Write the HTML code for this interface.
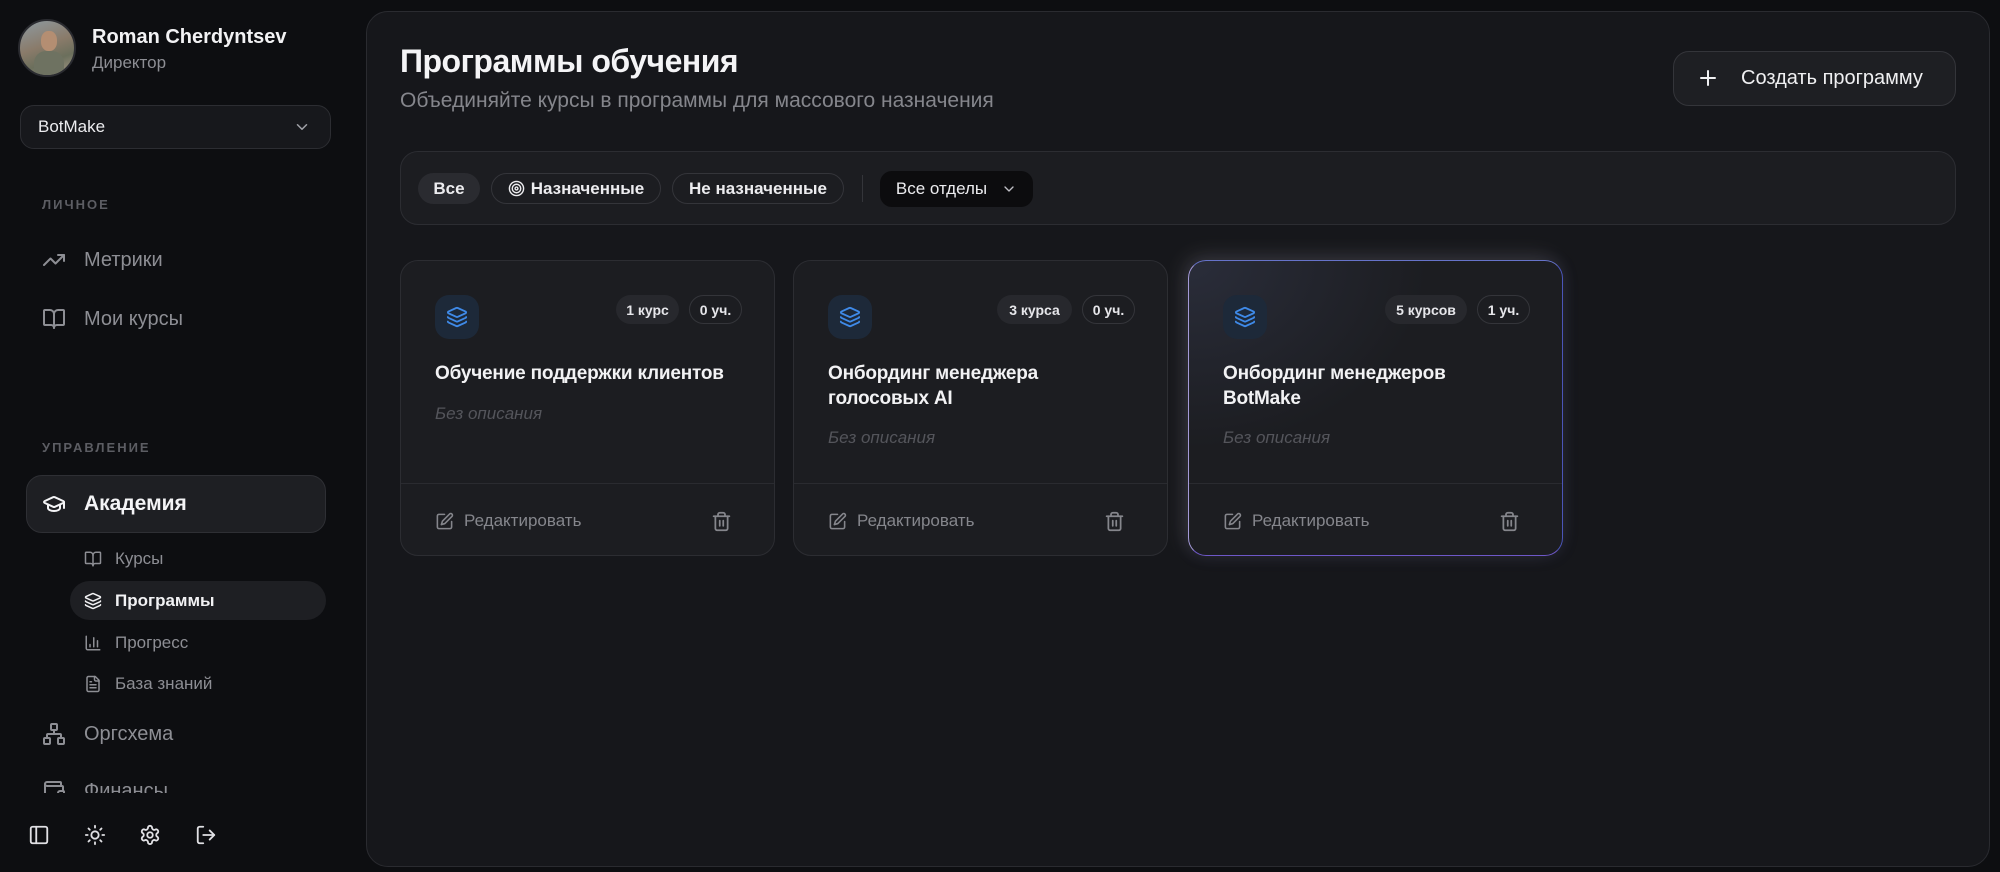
<!DOCTYPE html>
<html><head><meta charset="utf-8"><style>
*{box-sizing:border-box;margin:0;padding:0}
body{width:2000px;height:872px;overflow:hidden;background:#0d0e11;font-family:"Liberation Sans","DejaVu Sans",sans-serif;color:#ececef;position:relative}
.abs{position:absolute}
svg{display:block}
.ic{fill:none;stroke:currentColor;stroke-width:2;stroke-linecap:round;stroke-linejoin:round}
.nav{position:absolute;left:42px;display:flex;align-items:center;color:#8d8e94;font-size:20px}
.nav svg{width:24px;height:24px;margin-right:18px}
.sub{position:absolute;left:84px;display:flex;align-items:center;color:#8d8e94;font-size:17px;height:38px}
.sub svg{width:18px;height:18px;margin-right:13px}
.sec{position:absolute;left:42px;font-size:13px;letter-spacing:2px;color:#5c5d63;font-weight:bold}
.main{position:absolute;left:366px;top:11px;width:1624px;height:856px;border:1px solid #2a2b30;border-radius:22px;background:#16171b}
.chip{position:absolute;top:173px;height:31px;border-radius:16px;font-size:17px;font-weight:bold;display:flex;align-items:center;justify-content:center;color:#ececef}
.card{position:absolute;top:260px;width:375px;height:296px;border:1px solid #2c2d32;border-radius:18px;background:#1c1d21;overflow:hidden}
.cico{position:absolute;left:34px;top:34px;width:44px;height:44px;border-radius:14px;background:#1d2939;display:flex;align-items:center;justify-content:center;color:#3f8ae8}
.badge{position:absolute;top:34px;height:29px;border-radius:15px;font-size:14px;font-weight:bold;display:flex;align-items:center;justify-content:center;color:#e6e6ea}
.b1{background:#27282d}
.b2{border:1px solid #34353a}
.ttl{position:absolute;left:34px;top:100px;width:296px;font-size:19px;font-weight:bold;line-height:25px;color:#f2f2f4;letter-spacing:-0.2px}
.desc{position:absolute;left:34px;font-size:17px;font-style:italic;color:#54555b}
.div{position:absolute;left:0;right:0;top:222px;border-top:1px solid #2a2b30}
.edit{position:absolute;left:34px;top:250px;display:flex;align-items:center;color:#85868c;font-size:17px}
.edit svg{width:19px;height:19px;margin-right:10px}
.trash{position:absolute;left:310px;top:249px;color:#85868c}
</style></head><body>

<div class="abs" style="left:18px;top:19px;width:58px;height:58px;border-radius:50%;border:2px solid #2a2b30;background:radial-gradient(circle at 55% 35%,#c9a98c 0 14%,transparent 15%),linear-gradient(160deg,#8d9aa1 0%,#8a7b6a 45%,#6b6f5c 70%,#a89b89 100%);overflow:hidden">
<div class="abs" style="left:14px;top:30px;width:30px;height:30px;border-radius:40% 40% 0 0;background:#6e7261"></div>
<div class="abs" style="left:21px;top:10px;width:16px;height:20px;border-radius:45%;background:#b48e72"></div>
</div>
<div class="abs" style="left:92px;top:26px;font-size:20px;font-weight:bold;color:#f2f2f4">Roman Cherdyntsev</div>
<div class="abs" style="left:92px;top:53px;font-size:17px;color:#8d8e94">Директор</div>

<div class="abs" style="left:20px;top:105px;width:311px;height:44px;border:1px solid #2c2d32;border-radius:14px;background:#17181c"></div>
<div class="abs" style="left:38px;top:117px;font-size:17px;color:#ececef">BotMake</div>
<svg class="abs ic" style="left:293px;top:118px;color:#a0a1a7" width="18" height="18" viewBox="0 0 24 24"><path d="M6 9l6 6 6-6"/></svg>

<div class="sec" style="top:197px">ЛИЧНОЕ</div>
<div class="nav" style="top:248px"><svg class="ic" viewBox="0 0 24 24"><path d="M22 7l-8.5 8.5-5-5L2 17"/><path d="M16 7h6v6"/></svg>Метрики</div>
<div class="nav" style="top:307px"><svg class="ic" viewBox="0 0 24 24"><path d="M12 7v14"/><path d="M3 18a1 1 0 0 1-1-1V4a1 1 0 0 1 1-1h5a4 4 0 0 1 4 4 4 4 0 0 1 4-4h5a1 1 0 0 1 1 1v13a1 1 0 0 1-1 1h-6a3 3 0 0 0-3 3 3 3 0 0 0-3-3z"/></svg>Мои курсы</div>

<div class="sec" style="top:440px">УПРАВЛЕНИЕ</div>
<div class="abs" style="left:26px;top:475px;width:300px;height:58px;border:1px solid #2e2f34;border-radius:16px;background:#1e1f23"></div>
<div class="nav" style="top:492px;color:#f4f4f6;font-weight:bold;font-size:21px"><svg class="ic" viewBox="0 0 24 24"><path d="M21.4 10.9a1 1 0 0 0 0-1.8L12.8 5.2a2 2 0 0 0-1.7 0L2.6 9.1a1 1 0 0 0 0 1.8l8.6 3.9a2 2 0 0 0 1.7 0z"/><path d="M22 10v6"/><path d="M6 12.5V16a6 3 0 0 0 12 0v-3.5"/></svg>Академия</div>

<div class="sub" style="top:540px"><svg class="ic" viewBox="0 0 24 24"><path d="M12 7v14"/><path d="M3 18a1 1 0 0 1-1-1V4a1 1 0 0 1 1-1h5a4 4 0 0 1 4 4 4 4 0 0 1 4-4h5a1 1 0 0 1 1 1v13a1 1 0 0 1-1 1h-6a3 3 0 0 0-3 3 3 3 0 0 0-3-3z"/></svg>Курсы</div>
<div class="abs" style="left:70px;top:581px;width:256px;height:39px;border-radius:20px;background:#1e1f23"></div>
<div class="sub" style="top:582px;color:#f2f2f4;font-weight:bold"><svg class="ic" viewBox="0 0 24 24"><path d="M12.8 2.2a2 2 0 0 0-1.7 0L2.6 6.1a1 1 0 0 0 0 1.8l8.6 3.9a2 2 0 0 0 1.7 0l8.5-3.9a1 1 0 0 0 0-1.8z"/><path d="M2 12a1 1 0 0 0 .6.9l8.6 3.9a2 2 0 0 0 1.7 0l8.6-3.9A1 1 0 0 0 22 12"/><path d="M2 17a1 1 0 0 0 .6.9l8.6 3.9a2 2 0 0 0 1.7 0l8.6-3.9A1 1 0 0 0 22 17"/></svg>Программы</div>
<div class="sub" style="top:624px"><svg class="ic" viewBox="0 0 24 24"><path d="M3 3v16a2 2 0 0 0 2 2h16"/><path d="M18 17V9"/><path d="M13 17V5"/><path d="M8 17v-3"/></svg>Прогресс</div>
<div class="sub" style="top:665px"><svg class="ic" viewBox="0 0 24 24"><path d="M15 2H6a2 2 0 0 0-2 2v16a2 2 0 0 0 2 2h12a2 2 0 0 0 2-2V7z"/><path d="M14 2v4a2 2 0 0 0 2 2h4"/><path d="M10 9H8M16 13H8M16 17H8"/></svg>База знаний</div>
<div class="nav" style="top:722px"><svg class="ic" viewBox="0 0 24 24"><rect x="16" y="16" width="6" height="6" rx="1"/><rect x="2" y="16" width="6" height="6" rx="1"/><rect x="9" y="2" width="6" height="6" rx="1"/><path d="M5 16v-3a1 1 0 0 1 1-1h12a1 1 0 0 1 1 1v3"/><path d="M12 12V8"/></svg>Оргсхема</div>
<div class="abs" style="left:0;top:775px;width:340px;height:18px;overflow:hidden">
<div class="nav" style="top:4px"><svg class="ic" viewBox="0 0 24 24"><path d="M19 7V4a1 1 0 0 0-1-1H5a2 2 0 0 0 0 4h15a1 1 0 0 1 1 1v4h-3a2 2 0 0 0 0 4h3a1 1 0 0 0 1-1v-2a1 1 0 0 0-1-1"/><path d="M3 5v14a2 2 0 0 0 2 2h15a1 1 0 0 0 1-1v-4"/></svg>Финансы</div>
</div>

<svg class="abs ic" style="left:28px;top:824px;color:#e0e0e4" width="22" height="22" viewBox="0 0 24 24"><rect x="3" y="3" width="18" height="18" rx="2"/><path d="M9 3v18"/></svg>
<svg class="abs ic" style="left:84px;top:824px;color:#e0e0e4" width="22" height="22" viewBox="0 0 24 24"><circle cx="12" cy="12" r="4"/><path d="M12 2v2M12 20v2M4.9 4.9l1.4 1.4M17.7 17.7l1.4 1.4M2 12h2M20 12h2M6.3 17.7l-1.4 1.4M19.1 4.9l-1.4 1.4"/></svg>
<svg class="abs ic" style="left:139px;top:824px;color:#e0e0e4" width="22" height="22" viewBox="0 0 24 24"><path d="M12.2 2h-.4a2 2 0 0 0-2 2v.2a2 2 0 0 1-1 1.7l-.4.3a2 2 0 0 1-2 0l-.2-.1a2 2 0 0 0-2.7.7l-.2.4a2 2 0 0 0 .7 2.7l.2.1a2 2 0 0 1 1 1.7v.5a2 2 0 0 1-1 1.7l-.2.1a2 2 0 0 0-.7 2.7l.2.4a2 2 0 0 0 2.7.7l.2-.1a2 2 0 0 1 2 0l.4.3a2 2 0 0 1 1 1.7v.2a2 2 0 0 0 2 2h.4a2 2 0 0 0 2-2v-.2a2 2 0 0 1 1-1.7l.4-.3a2 2 0 0 1 2 0l.2.1a2 2 0 0 0 2.7-.7l.2-.4a2 2 0 0 0-.7-2.7l-.2-.1a2 2 0 0 1-1-1.7v-.5a2 2 0 0 1 1-1.7l.2-.1a2 2 0 0 0 .7-2.7l-.2-.4a2 2 0 0 0-2.7-.7l-.2.1a2 2 0 0 1-2 0l-.4-.3a2 2 0 0 1-1-1.7V4a2 2 0 0 0-2-2z"/><circle cx="12" cy="12" r="3"/></svg>
<svg class="abs ic" style="left:195px;top:824px;color:#e0e0e4" width="22" height="22" viewBox="0 0 24 24"><path d="M9 21H5a2 2 0 0 1-2-2V5a2 2 0 0 1 2-2h4"/><path d="M16 17l5-5-5-5"/><path d="M21 12H9"/></svg>

<div class="main"></div>
<div class="abs" style="left:400px;top:43px;font-size:32px;font-weight:bold;color:#f4f4f6;letter-spacing:-0.5px">Программы обучения</div>
<div class="abs" style="left:400px;top:89px;font-size:21px;color:#85868c">Объединяйте курсы в программы для массового назначения</div>

<div class="abs" style="left:1673px;top:51px;width:283px;height:55px;border:1px solid #34353a;border-radius:16px;background:#1e1f23"></div>
<svg class="abs" style="left:1699px;top:69px" width="18" height="18" viewBox="0 0 18 18"><path d="M9 2v14M2 9h14" stroke="#f0f0f2" stroke-width="2" stroke-linecap="round"/></svg>
<div class="abs" style="left:1741px;top:67px;font-size:20px;color:#f0f0f2">Создать программу</div>

<div class="abs" style="left:400px;top:151px;width:1556px;height:74px;border:1px solid #2c2d32;border-radius:18px;background:#1c1d21"></div>
<div class="chip" style="left:418px;width:62px;background:#2a2b30">Все</div>
<div class="chip" style="left:491px;width:170px;border:1px solid #34353a"><svg class="ic" style="margin-right:6px" width="17" height="17" viewBox="0 0 24 24"><circle cx="12" cy="12" r="10"/><circle cx="12" cy="12" r="6"/><circle cx="12" cy="12" r="2"/></svg>Назначенные</div>
<div class="chip" style="left:672px;width:172px;border:1px solid #34353a">Не назначенные</div>
<div class="abs" style="left:862px;top:175px;width:1px;height:27px;background:#34353a"></div>
<div class="chip" style="left:880px;top:171px;width:153px;height:36px;border-radius:12px;background:#0c0c0e;font-weight:normal">Все отделы<svg class="ic" style="margin-left:14px;color:#c0c0c6" width="16" height="16" viewBox="0 0 24 24"><path d="M6 9l6 6 6-6"/></svg></div>

<div class="card" style="left:400px">
 <div class="cico"><svg class="ic" width="22" height="22" viewBox="0 0 24 24"><path d="M12.8 2.2a2 2 0 0 0-1.7 0L2.6 6.1a1 1 0 0 0 0 1.8l8.6 3.9a2 2 0 0 0 1.7 0l8.5-3.9a1 1 0 0 0 0-1.8z"/><path d="M2 12a1 1 0 0 0 .6.9l8.6 3.9a2 2 0 0 0 1.7 0l8.6-3.9A1 1 0 0 0 22 12"/><path d="M2 17a1 1 0 0 0 .6.9l8.6 3.9a2 2 0 0 0 1.7 0l8.6-3.9A1 1 0 0 0 22 17"/></svg></div>
 <div class="badge b1" style="left:215px;width:63px">1 курс</div>
 <div class="badge b2" style="left:288px;width:53px">0 уч.</div>
 <div class="ttl">Обучение поддержки клиентов</div>
 <div class="desc" style="top:143px">Без описания</div>
 <div class="div"></div>
 <div class="edit"><svg class="ic" viewBox="0 0 24 24"><path d="M12 3H5a2 2 0 0 0-2 2v14a2 2 0 0 0 2 2h14a2 2 0 0 0 2-2v-7"/><path d="M18.4 2.6a2.1 2.1 0 0 1 3 3L12.4 14.6 8 16l1.4-4.4z"/></svg>Редактировать</div>
 <svg class="trash ic" width="21" height="23" viewBox="0 0 24 24"><path d="M3 6h18"/><path d="M19 6v14a2 2 0 0 1-2 2H7a2 2 0 0 1-2-2V6"/><path d="M8 6V4a2 2 0 0 1 2-2h4a2 2 0 0 1 2 2v2"/><path d="M10 11v6M14 11v6"/></svg>
</div>

<div class="card" style="left:793px">
 <div class="cico"><svg class="ic" width="22" height="22" viewBox="0 0 24 24"><path d="M12.8 2.2a2 2 0 0 0-1.7 0L2.6 6.1a1 1 0 0 0 0 1.8l8.6 3.9a2 2 0 0 0 1.7 0l8.5-3.9a1 1 0 0 0 0-1.8z"/><path d="M2 12a1 1 0 0 0 .6.9l8.6 3.9a2 2 0 0 0 1.7 0l8.6-3.9A1 1 0 0 0 22 12"/><path d="M2 17a1 1 0 0 0 .6.9l8.6 3.9a2 2 0 0 0 1.7 0l8.6-3.9A1 1 0 0 0 22 17"/></svg></div>
 <div class="badge b1" style="left:203px;width:75px">3 курса</div>
 <div class="badge b2" style="left:288px;width:53px">0 уч.</div>
 <div class="ttl">Онбординг менеджера голосовых AI</div>
 <div class="desc" style="top:167px">Без описания</div>
 <div class="div"></div>
 <div class="edit"><svg class="ic" viewBox="0 0 24 24"><path d="M12 3H5a2 2 0 0 0-2 2v14a2 2 0 0 0 2 2h14a2 2 0 0 0 2-2v-7"/><path d="M18.4 2.6a2.1 2.1 0 0 1 3 3L12.4 14.6 8 16l1.4-4.4z"/></svg>Редактировать</div>
 <svg class="trash ic" width="21" height="23" viewBox="0 0 24 24"><path d="M3 6h18"/><path d="M19 6v14a2 2 0 0 1-2 2H7a2 2 0 0 1-2-2V6"/><path d="M8 6V4a2 2 0 0 1 2-2h4a2 2 0 0 1 2 2v2"/><path d="M10 11v6M14 11v6"/></svg>
</div>

<div class="abs" style="left:1188px;top:260px;width:375px;height:296px;border-radius:18px;box-shadow:-5px -5px 22px rgba(255,240,210,0.12),0 0 18px rgba(90,100,220,0.10)"></div>
<div class="card" style="left:1188px;border:1.5px solid #4b55b8;background:radial-gradient(ellipse at 0% 0%,#2a2d3a 0%,#1c1d21 45%);border-top-color:#6673c9;border-left-color:#a49ad8;border-bottom-color:#6e58c8">
 <div class="cico"><svg class="ic" width="22" height="22" viewBox="0 0 24 24"><path d="M12.8 2.2a2 2 0 0 0-1.7 0L2.6 6.1a1 1 0 0 0 0 1.8l8.6 3.9a2 2 0 0 0 1.7 0l8.5-3.9a1 1 0 0 0 0-1.8z"/><path d="M2 12a1 1 0 0 0 .6.9l8.6 3.9a2 2 0 0 0 1.7 0l8.6-3.9A1 1 0 0 0 22 12"/><path d="M2 17a1 1 0 0 0 .6.9l8.6 3.9a2 2 0 0 0 1.7 0l8.6-3.9A1 1 0 0 0 22 17"/></svg></div>
 <div class="badge b1" style="left:196px;width:82px">5 курсов</div>
 <div class="badge b2" style="left:288px;width:53px">1 уч.</div>
 <div class="ttl">Онбординг менеджеров<br>BotMake</div>
 <div class="desc" style="top:167px">Без описания</div>
 <div class="div"></div>
 <div class="edit"><svg class="ic" viewBox="0 0 24 24"><path d="M12 3H5a2 2 0 0 0-2 2v14a2 2 0 0 0 2 2h14a2 2 0 0 0 2-2v-7"/><path d="M18.4 2.6a2.1 2.1 0 0 1 3 3L12.4 14.6 8 16l1.4-4.4z"/></svg>Редактировать</div>
 <svg class="trash ic" width="21" height="23" viewBox="0 0 24 24"><path d="M3 6h18"/><path d="M19 6v14a2 2 0 0 1-2 2H7a2 2 0 0 1-2-2V6"/><path d="M8 6V4a2 2 0 0 1 2-2h4a2 2 0 0 1 2 2v2"/><path d="M10 11v6M14 11v6"/></svg>
</div>

</body></html>
